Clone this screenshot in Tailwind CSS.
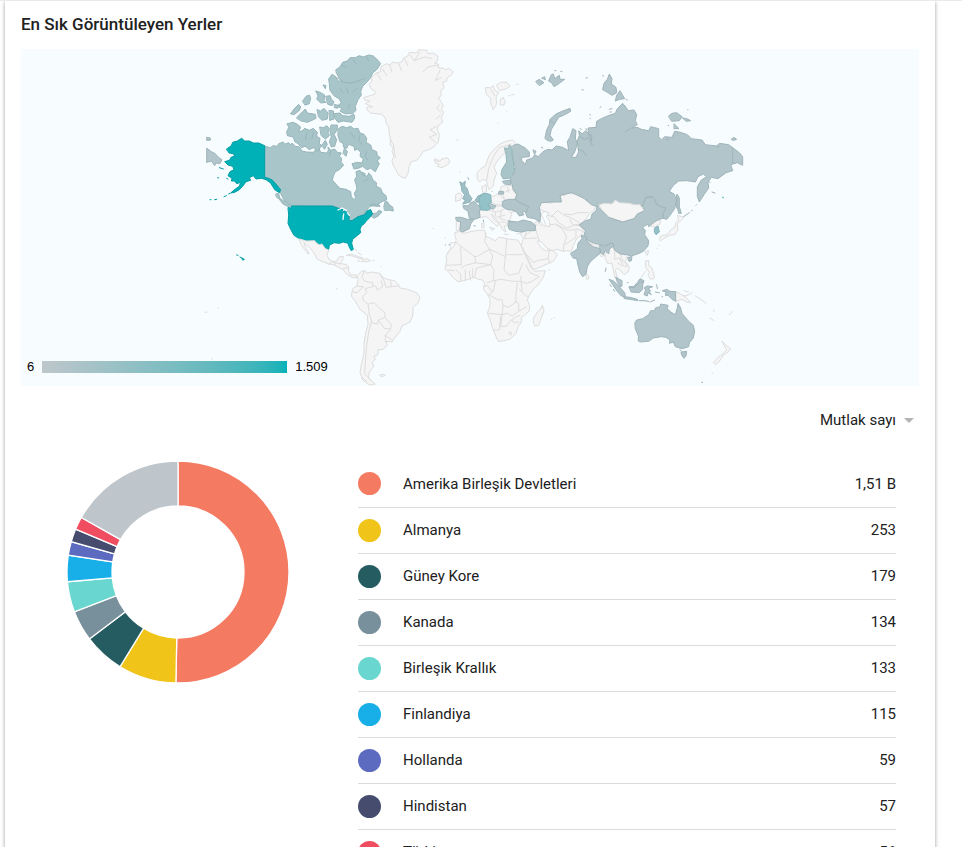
<!DOCTYPE html>
<html lang="tr">
<head>
    <meta charset="UTF-8">
    <meta name="viewport" content="width=device-width, initial-scale=1.0">
    <title>En Sık Görüntüleyen Yerler</title>
    <script src="https://cdn.jsdelivr.net/npm/@tailwindcss/browser@4"></script>
</head>
<body class="h-screen overflow-hidden bg-white border-t border-[#e8eaed] pl-[5px] pr-[27px] font-[Roboto,sans-serif] text-[#212121]">

    <main class="min-h-full bg-white px-4 pb-6 shadow-[0_1px_4px_rgba(0,0,0,0.4)]">
        <h2 class="h-12 flex items-center text-[17px] font-medium">En Sık Görüntüleyen Yerler</h2>

        <!-- Dünya haritası -->
        <div class="relative bg-[#f7fcff]">
            <svg viewBox="0 0 2694 1011" class="block w-full" stroke-width="3" stroke-linejoin="round" stroke-linecap="round" role="img" aria-label="Dünya haritası">
                <!-- Kanada -->
                <g transform="translate(537 -12)" fill="#a8c5ca" stroke="#98b5ba">
                    <path d="M194 304L212 308 218 302 232 304 236 296 250 291 254 298 266 293 272 300 276 294 286 304 298 306 306 318 320 321 340 322 345 316 358 312 362 322 378 324 385 318 384 306 392 316 404 312 412 322 424 324 418 334 425 340 423 352 431 360 418 374 405 381 400 394 397 405 410 420 420 430 438 433 452 440 454 455 462 464 467 458 463 445 471 432 468 418 464 405 470 394 468 380 480 376 490 390 502 394 506 384 514 392 518 404 530 414 528 424 542 430 548 444 558 452 560 464 546 470 530 480 510 484 498 498 490 508 512 494 518 506 530 504 536 496 546 500 536 512 522 520 512 512 486 512 472 522 452 530 446 516 442 500 430 492 397 484 268 483 254 468 240 442 236 428 222 412 206 402 194 397Z"/>
                    <path d="M228 447l8 -2 3 14 12 9 8 2 12 12 -6 3 -16 -8 -11 -14 -8 -6zM552 482l4 -14 8 4 4 8 10 6 2 12 -12 -2 -14 0z"/>
                    <path d="M262 236L280 232 292 238 302 246 296 262 308 256 314 250 328 256 340 250 352 262 350 274 360 280 358 296 366 302 352 318 340 308 328 314 316 304 304 308 294 296 284 290 280 276 262 272 260 260 266 248Z"/>
                    <path d="M360 246L370 248 380 242 388 250 384 262 388 272 376 282 364 272ZM394 240L412 240 412 254 402 268 410 284 404 304 394 306 388 290 394 276 390 260ZM366 300l10 -14 6 12 -8 14z"/>
                    <path d="M415 252L426 244 440 248 452 244 462 252 474 250 480 264 492 268 500 280 498 292 512 300 516 314 530 320 532 332 541 338 532 348 538 356 532 368 526 380 512 370 500 374 488 364 474 370 462 372 456 356 472 352 486 354 490 342 480 334 482 322 472 312 464 316 462 304 446 298 440 310 430 306 430 296 420 290 414 272Z"/>
                    <path d="M434 310l8 10 -4 14 -8 -8zM486 382l10 4 -4 6zM512 480l8 -4 8 4 8 -2 4 6 -12 0z"/>
                    <path d="M408 74L420 66 428 52 442 48 450 38 466 38 478 32 490 36 506 30 520 33 534 46 542 56 530 74 518 84 512 98 500 112 488 124 482 140 484 150 474 164 466 184 468 196 458 206 434 206 420 198 426 190 410 184 424 174 418 162 402 152 390 136 388 116 386 102 396 88 408 96 414 108 426 108 416 96 410 86Z"/>
                    <path d="M403 206L420 204 428 212 448 214 462 208 464 220 456 232 430 228 414 232 406 222Z"/>
                    <path d="M348 138L360 142 374 150 372 166 378 172 362 174 350 162 354 154ZM378 154L390 152 394 162 402 170 396 182 384 178ZM308 168L318 154 328 150 332 160 328 176 316 180ZM272 206L282 192 296 178 302 186 298 196 284 208ZM290 218L306 202 316 192 322 204 346 208 348 220 336 226 322 232 304 228ZM352 194L362 198 372 190 384 204 382 222 366 226 356 216ZM388 196L400 198 402 222 390 226ZM370 120l8 2 -2 8zM404 178l12 4 -4 8 -8 -2z"/>
                    <path fill="none" d="M412 98l18 14 26 2 18 -6 20 -8M424 60l16 8M460 44l10 14M500 36l6 12M440 130l4 16M470 130l-12 12M320 264l-4 20M340 262l-4 18M450 262l14 16M480 270l-4 16 10 12M500 320l-4 14 8 12M392 318l-4 14M505 402l-16 8M420 132l10 12M450 176l-6 14"/>
                </g>
                <!-- Grönland, İzlanda, Svalbard -->
                <g transform="translate(957 -12)" fill="#f5f5f5" stroke="#dddddd">
                    <path d="M72 158L90 152 104 148 106 140 94 132 88 118 96 108 94 98 108 84 122 80 122 66 140 56 150 60 156 52 172 54 186 50 192 38 202 34 208 22 230 24 236 14 260 16 264 26 280 24 294 34 292 48 284 54 296 58 294 68 310 70 316 74 326 70 340 80 334 90 322 98 320 108 308 112 312 128 302 138 304 152 296 158 304 172 310 182 304 192 311 202 304 218 308 232 296 240 292 254 298 268 295 290 284 304 268 314 250 319 240 334 230 346 214 350 208 362 204 384 196 400 184 396 174 388 168 374 160 362 156 346 162 334 156 320 160 308 150 300 152 284 148 268 146 246 138 234 136 220 126 208 108 206 92 204 80 194 82 186 98 186 76 176 90 168 76 166Z"/>
                    <path d="M283 344L294 350 304 343 322 338 330 350 322 360 306 368 292 364 298 358 288 356ZM437 128L452 128 460 122 464 136 476 142 468 156 470 176 460 194 452 176 452 160 440 148ZM470 120L482 112 500 112 510 124 498 132 480 136ZM482 162l8 -4 6 14 -4 8 -10 0zM506 152l5 0M516 148l6 2M474 234l1 0M500 198l1 0M530 118l5 0M350 286l4 -2M360 382l2 0"/>
                    <path fill="none" d="M112 86l12 20M128 72l12 20M150 62l6 20M176 56l8 20M194 42l10 20M210 30l14 18M240 20l-16 26 30 -10 20 4M294 60l-30 6 -14 14M300 76l-14 30 18 -8M298 180l-8 10 12 12M300 212l-12 10M290 244l-20 10 20 14 -22 8 18 16M150 282l10 16 6 40M452 132l12 20"/>
                </g>
                <!-- ABD -->
                <g fill="#00b2b8" stroke="#009da3">
                    <path transform="translate(537 -12)" d="M80 312L94 302 98 292 112 288 125 280 134 288 148 288 160 294 176 294 194 302 194 397 206 400 218 406 230 420 242 434 238 443 224 434 212 414 198 404 184 400 168 402 160 392 148 398 152 406 138 410 128 424 118 434 104 442 92 444 106 432 118 424 122 412 110 416 104 408 94 408 96 400 84 392 90 380 102 374 98 364 84 360 74 350 88 346 94 336 104 334 100 326 88 324ZM30 464l3 0M44 464l6 -1M72 455l7 -3M86 447l4 -2M58 368l12 4M53 398l3 1M80 400l4 2"/>
                    <path transform="translate(537 423)" d="M265 53L274 54 274 48 397 48 412 54 430 58 424 68 436 62 444 70 448 82 446 92 456 92 474 80 494 74 502 62 512 59 517 72 508 84 498 94 494 100 484 108 480 118 482 128 470 138 458 148 455 160 460 178 454 182 448 172 444 160 430 156 418 160 402 158 388 166 386 178 376 174 366 162 358 164 350 160 344 152 320 153 298 146 282 136 272 118 264 100 266 76ZM110 195l4 1M120 201l4 2M126 204l7 4 -4 2z"/>
                    <path transform="translate(1527 33)" d="M578 412l2 1"/>
                </g>
                <path transform="translate(537 423)" fill="none" stroke="#f7fcff" stroke-width="4" d="M414 60l12 -6 14 8M431 72l-2 16M442 68l6 8"/>
                <!-- Orta ve Güney Amerika -->
                <g transform="translate(537 423)" fill="#f5f5f5" stroke="#dddddd">
                    <path d="M298 147L320 153 344 152 350 160 358 164 366 162 376 176 386 180 381 196 388 210 402 215 412 212 416 201 430 199 428 210 420 220 440 224 446 230 446 244 454 256 468 254 470 264 456 262 440 252 430 240 416 232 400 224 386 222 366 214 350 206 344 192 332 176 318 164 312 158 316 172 328 190 324 192 312 176 304 164Z"/>
                    <path d="M472 256L484 244 496 242 500 250 516 246 540 250 548 262 562 268 584 272 594 282 600 294 622 298 650 308 660 322 654 338 640 352 638 378 630 396 606 408 600 424 584 444 576 456 558 454 562 464 550 478 534 480 534 494 522 498 526 508 516 518 522 528 508 546 506 562 514 574 526 582 508 585 488 570 480 548 484 524 492 490 492 460 498 424 504 404 502 376 480 358 466 334 454 318 458 296 470 288 474 270Z"/>
                    <path d="M440 196l14 -4 16 6 18 6 -10 2 -20 -8zM488 208l12 -2 12 6 -10 3 -16 -1zM472 212l8 2M518 212l5 0M540 556l6 -3 10 2 -8 5zM466 178l4 3M474 188l10 6M543 230l1 0M409 296l3 1M15 367l6 -1M54 353l2 1M36 507l2 0"/>
                    <path fill="none" d="M492 244l-6 18 8 12 24 4 0 12 -22 6M496 294l4 14 -12 10 2 14 14 10 4 32 8 22M458 306l14 2 18 -18 -18 -2M518 286l10 4 4 10 16 -10 -4 -18M540 252l12 20 6 20 16 -2 20 -2M572 272l2 18M506 342l16 -4 16 16 16 14 0 14 -18 8 -4 12 -18 -4M554 380l8 12 12 10 -2 14 -18 0 -16 -22M572 418l-16 18 0 20M556 436l20 14M514 396l-8 30 -6 40 -4 50 -2 36 20 20M386 222l16 -8 4 12M404 218l18 4M430 236l14 -4M486 562l14 12"/>
                </g>
                <!-- Afrika, Ortadoğu, Orta Asya -->
                <g transform="translate(1227 513)" fill="#f5f5f5" stroke="#dddddd">
                    <path d="M75 38L88 34 102 40 124 34 150 31 164 31 168 50 180 54 196 62 206 52 222 54 240 58 264 60 274 78 282 98 292 118 302 140 314 154 346 152 340 172 326 192 308 210 298 226 292 240 299 256 298 272 286 284 274 292 274 306 264 322 258 340 240 358 222 362 205 365 198 350 188 326 182 304 172 280 180 258 180 238 172 222 160 208 164 192 158 180 146 178 130 172 114 178 100 182 84 185 70 174 58 158 45 146 50 124 48 108 58 92 72 78 78 62Z"/>
                    <path d="M312 292L322 276 332 268 337 255 342 272 334 294 326 316 314 318 310 304ZM364 298l2 -1M372 293l2 0M356 149l3 0M45 53l1 0M9 26l2 0"/>
                    <path d="M274 32L286 34 296 28 318 30 314 8 330 4 344 20 350 6 346 -12 342 -26 328 -34 332 -50 346 -54 362 -50 378 -58 396 -56 390 -74 404 -74 418 -84 430 -78 442 -82 462 -62 498 -42 492 -30 478 -18 462 4 448 14 462 32 454 46 440 56 430 76 424 94 410 92 398 94 382 88 366 92 350 84 338 70 326 60 322 66 334 84 346 92 356 90 368 92 382 104 372 122 352 132 320 146 308 148 298 124 286 100 274 76 280 54 274 48Z"/>
                    <path fill="none" d="M82 68l-20 0 0 18 -10 14M84 72l50 38 10 -2 34 -20 -14 -24 4 -24M92 80l2 54 -44 2M134 110l4 18 -32 8 -12 8M230 58l-4 52 -46 -22M230 104l48 0M178 88l10 20 -6 26 -42 10 -6 26M226 110l-4 40 14 16 30 -6 12 -30M182 134l10 16 -2 32 24 -4 22 4 14 2M182 134l-48 -6M190 182l-18 6M196 184l-6 30 -14 10 28 16 12 -2 2 18 18 6 22 -16 0 -26 4 -30M250 184l22 0 16 6 14 -4 26 -16 -28 -12 -12 -22M176 280l40 4 16 -4 14 8 20 -14 24 -14M220 256l-4 28 -4 36 18 -2 14 -18 12 -8 14 -6M212 290l-4 40 -16 0M244 300l10 8 12 -2M242 336l4 6 -5 3 -4 -5zM254 244l12 6 0 22M268 208l26 24M106 150l0 32M118 154l4 26M78 150l14 12 0 22M56 150l16 2M128 146l0 28M272 170l4 42M160 200l12 -4 16 20"/>
                    <path fill="none" d="M288 36l-4 20 36 -2M318 30l10 34M282 96l10 10 18 22 12 -6 32 -6 4 -24M354 116l6 14M350 16l26 -4 22 16 12 24 -8 20 -2 22M352 -14l20 4 12 16 26 18 28 -10 10 -2M364 -10l18 -18 22 14 20 8 24 14M404 -18l20 2 20 -6 30 0M410 30l28 0 0 22 -34 22M438 26l22 8M320 4l16 14M328 8l-12 12M378 12l32 18M420 -2l8 16 24 4M282 50l20 -16"/>
                    <path fill="#f7fcff" d="M334 -18l10 -8 12 4 -6 12 8 12 2 18 -12 -2 -6 -18z"/>
                </g>
                <!-- Avrupa, veri yok -->
                <g transform="translate(1227 243)" fill="#f5f5f5" stroke="#dddddd">
                    <path d="M150 240L182 202 222 196 220 170 246 166 262 198 256 212 262 240 244 248 238 266 212 262 190 248Z"/>
                    <path d="M142 128L152 116 166 108 172 90 180 72 194 56 210 42 228 34 248 30 258 40 252 50 238 44 228 52 226 68 212 80 200 96 192 112 200 130 192 150 190 168 178 180 172 166 170 152 160 148 148 156 142 146Z"/>
                    <path d="M214 170L230 164 246 166 250 182 260 196 250 210 222 208 210 196ZM182 202L204 192 220 194 224 214 218 226 200 224 184 218ZM156 170l12 -6 2 20 -10 6zM78 194l10 -6 8 8 -4 14 -14 4zM80 274h12l-4 28h-8zM184 184l4 1M15 86l14 8 8 -8"/>
                    <path d="M150 242L176 240 190 228 216 228 232 236 246 252 240 268 230 276 234 288 222 288 228 306 216 298 208 280 194 262 184 252 192 268 206 280 202 290 186 276 170 260 152 262ZM180 292l14 4 -6 6zM156 280l6 0 0 14 -5 0zM222 312l14 2M262 312l10 -3"/>
                    <path fill="none" d="M170 150l6 -34 14 -36 18 -28 20 -4 14 -6M216 190l24 -10M232 168l4 20M176 240l20 6 18 -4 14 -8M196 246l0 12M214 242l-4 24 16 4M200 262l24 -6M210 276l16 0"/>
                </g>
                <!-- Rusya -->
                <g transform="translate(1527 33)" fill="#b1c5ca" stroke="#9fb4ba">
                    <path d="M-50 256L-36 252 -14 264 -2 276 -2 290 -24 292 -26 300 -14 314 -10 300 8 294 14 284 24 290 40 274 54 268 66 270 78 258 98 262 116 272 112 244 120 232 128 206 138 212 136 234 142 252 134 276 124 292 138 292 146 276 142 244 148 226 146 212 156 222 168 212 178 224 186 226 184 244 176 222 174 204 198 202 200 184 214 176 232 168 256 160 262 146 278 130 288 142 294 152 312 150 320 164 316 182 322 194 304 204 322 202 334 208 356 212 362 200 386 206 386 230 394 240 404 230 426 232 434 214 448 216 472 224 484 236 516 240 526 254 560 258 568 250 596 254 612 266 628 278 638 290 638 316 622 308 602 314 608 332 588 338 564 356 544 352 534 366 536 384 522 404 508 426 502 410 502 380 514 360 530 350 520 342 504 350 496 366 472 362 446 363 430 376 418 394 432 402 440 420 434 446 420 466 410 478 396 474 402 450 380 434 372 412 350 410 340 440 314 434 272 432 256 422 248 434 210 436 202 440 184 434 164 416 126 398 90 406 94 426 66 426 34 428 28 442 32 464 30 486 14 476 -8 472 -14 456 -4 440 -22 436 -44 420 -40 402 -50 390 -54 372 -62 362 -50 344 -44 320 -52 300Z"/>
                    <path d="M45 234L50 210 58 194 60 178 78 162 96 154 120 145 122 154 104 164 86 172 74 192 64 208 60 226 70 240 62 244 50 240ZM218 88L222 70 232 58 238 42 246 56 244 72 258 82 260 98 246 106 234 98ZM256 122L260 106 270 92 284 116 270 118ZM416 168L426 160 440 158 456 170 448 182 426 184ZM458 174l12 2 12 6 -12 2zM433 192l14 14 -14 0zM604 238l8 -6 8 6 -8 3zM442 404l6 10 0 26 6 20 -8 0 -4 -18z"/>
                    <path d="M18 64l10 -6 14 10 -14 8zM36 54l8 -4 2 8zM56 62l8 -18 6 -2 4 14 14 -10 2 12 14 0 -16 12 -16 10 -6 -10zM74 32l4 0M92 34l4 1M168 54l4 -1M156 89l4 1M218 47l3 1M210 142l3 -2M180 163l1 2M180 176l1 0M238 148l8 -2M240 156l4 0M288 118l4 2M473 149l1 0M414 196l2 1M10 270l8 4 -4 8zM34 262l4 2M150 205l4 4M168 206l2 4M538 366l2 1M546 396l9 3M498 436l2 -2M485 452l2 -1M478 458l-20 14M144 268l14 4 10 14M180 240l4 14 6 2M410 238l6 0"/>
                    <path fill="none" d="M608 266l0 42M300 206l-14 10M60 180l12 12M150 230l14 8 12 -4M560 262l8 -4M440 404l0 40"/>
                    <path transform="translate(-990 -45)" d="M21 310L34 320 46 326 54 336 66 344 60 356 48 354 44 362 34 348 21 352ZM21 277l10 2 0 7 -10 0z"/>
                </g>
                <!-- Avrupa ülkeleri -->
                <g transform="translate(1227 243)" fill="#b1c5ca" stroke="#9fb4ba">
                    <path d="M218 214L236 208 256 208 268 218 280 222 296 230 290 244 276 246 282 254 268 258 260 246 246 240 230 238 218 230ZM235 280L246 274 262 276 280 270 304 276 316 286 316 302 290 302 276 306 256 304 238 298ZM236 272l8 2 -6 4zM100 226L114 228 120 220 132 214 142 224 152 232 148 246 150 262 134 268 118 264 114 244 102 236ZM78 262L94 262 112 268 132 268 122 282 118 296 98 306 90 302 92 276 80 272ZM208 184l12 0 0 8 -14 0zM218 154l24 -4 0 14 -18 -2zM182 222l16 6 -8 10 -12 -6zM132 287l4 1M160 270l1 6M46 345l1 0M57 344l2 0M138 216l10 0"/>
                    <path fill="#9dbfc5" stroke="#8eb0b6" d="M90 156L98 160 106 154 104 168 112 176 116 192 126 206 120 216 98 222 106 210 98 206 104 194 96 184 94 170ZM114 143l2 5M136 210L144 198 154 194 150 216 138 214Z"/>
                    <path fill="#a8c5ca" stroke="#98b5ba" d="M224 54L234 56 238 45 246 52 246 72 250 96 254 124 240 144 220 147 213 134 216 118 230 96 228 74Z"/>
                    <path fill="#93c2c8" stroke="#84b3b9" d="M148 204L156 192 168 190 182 194 184 218 174 224 182 236 172 241 152 239 148 222Z"/>
                </g>
                <!-- Asya ve Okyanusya, veri yok -->
                <g transform="translate(1617 423)" fill="#f5f5f5" stroke="#dddddd">
                    <path d="M118 44L134 40 156 42 166 30 178 38 208 40 222 44 240 44 246 54 254 62 232 72 222 86 188 96 146 82 126 62ZM82 156l20 6 16 8 -2 6 -16 -2 -16 -8z"/>
                    <path d="M136 192L146 174 156 166 164 184 180 192 196 194 202 204 196 214 208 230 206 244 192 254 182 242 172 234 166 240 172 264 164 262 160 240 156 220 142 220 136 206ZM118 184l8 0 8 12 -10 4zM80 252l8 10 -6 8 -4 -8zM258 184l8 -2 -4 14 -5 -4z"/>
                    <path d="M258 212l8 0 0 14 10 8 8 30 -12 4 -8 -12 4 -8 -10 -14zM256 244l-12 18M272 108L286 94 302 90 300 102 284 110ZM298 148L302 138 322 134 332 120 344 112 348 96 356 92 352 76 372 82 362 92 352 102 354 120 344 134 328 136 314 144 302 152ZM347 305L362 312 376 320 392 338 380 336 366 328 348 334ZM372 318l16 -4 8 -6M372 302l14 4M406 318l14 8 18 14M450 384l12 8M460 360l2 4M508 374l4 -2M514 367l3 -1M487 454L498 466 512 476 502 488 490 494 484 506 476 516 466 524 460 518 474 502 490 490 500 480 492 466ZM456 549l3 1M296 166l2 0M290 175l1 0"/>
                    <path fill="none" d="M164 186l0 22 14 -4 12 12M178 204l10 22 12 4M172 218l14 10M180 192l6 14 16 22"/>
                </g>
                <g transform="translate(1617 423)" fill="#b1c5ca" stroke="#9fb4ba">
                    <path d="M58 104L76 92 92 88 96 72 108 62 112 48 126 62 146 82 188 96 222 86 232 72 254 62 248 48 256 24 276 20 290 44 304 50 318 54 308 72 310 84 292 90 278 100 266 110 264 102 248 112 256 122 254 134 266 152 264 168 250 184 232 192 214 198 200 194 182 192 164 180 158 164 130 166 104 160 84 152 72 136 76 122Z"/>
                    <path d="M32 190L42 184 52 176 54 160 66 146 64 136 78 140 82 156 100 170 120 176 122 188 106 202 90 216 82 230 78 252 68 260 60 248 54 226 50 206 40 204ZM120 166L134 170 156 158 162 166 148 178 146 192 136 182 130 194 122 188ZM204 202l12 -2 -2 12 -6 2zM138 234l-2 10"/>
                    <path d="M168 262l10 6 8 4 0 16 -6 2 -8 -14zM148 268L162 274 178 290 194 308 196 320 184 318 170 302 158 284ZM192 320L210 322 232 328 234 332 210 328 194 326ZM238 332l14 0 14 2M270 336l14 -6M208 290L220 290 232 278 240 266 252 272 248 284 248 298 238 308 214 306ZM254 292L262 288 278 290 264 296 272 302 268 306 274 314 264 308 262 318 252 314 256 302ZM290 284l2 12M286 306l12 2M308 302L320 298 330 304 347 305 347 334 336 328 324 316 316 316 318 308ZM150 284l4 6M160 298l4 6M306 320l2 0M202 278l2 0"/>
                    <path d="M225 398L230 390 248 386 266 374 272 362 284 362 286 354 300 350 302 342 324 346 322 356 332 366 346 374 352 354 354 340 362 354 366 370 374 380 386 394 400 406 404 424 400 444 388 458 386 470 366 476 346 470 340 456 328 460 330 450 318 442 304 440 280 444 266 454 240 456 234 452 236 440 226 416ZM360 480l4 3M364 486l16 -2 -2 14 -6 7 -6 -8zM425 577l3 0"/>
                    <path fill="#93c2c8" stroke="#84b3b9" d="M284 114L294 108 298 126 288 134 284 128Z"/>
                    <path fill="none" d="M208 292l16 0 16 -16 10 0"/>
                </g>
            </svg>
            <div class="absolute left-[6px] bottom-[11px] flex items-center gap-2 font-['Liberation_Sans',Arial,sans-serif] text-[13px] leading-4 text-black">
                <span>6</span>
                <span class="w-[245px] h-3 bg-linear-to-r from-[#bdc6cb] to-[#00b2b8]"></span>
                <span>1.509</span>
            </div>
        </div>

        <div class="flex justify-end pt-[22px] pr-[5px]">
            <label class="relative flex items-center">
                <span class="sr-only">Ölçüm</span>
                <select class="appearance-none bg-transparent h-6 pr-[17px] text-[15px] cursor-pointer">
                    <option>Mutlak sayı</option>
                </select>
                <svg viewBox="0 0 10 5" class="absolute right-0 w-[10px] h-[5px] pointer-events-none" fill="#b4b4b4"><path d="M0 0h10L5 5z"/></svg>
            </label>
        </div>

        <div class="flex items-start justify-between pt-[29px] pl-[46px] pr-[23px]">
            <svg id="donut" viewBox="0 0 222 222" class="w-[222px] shrink-0" stroke="#ffffff" stroke-width="1.3" role="img" aria-label="Ülkelere göre dağılım"></svg>

            <table class="ml-[69px] w-full text-[15px]">
                <tbody>
                    <tr class="h-[46px] border-b border-[#dcdcdc]">
                        <td class="w-[45px]"><span class="block size-[23px] rounded-full bg-[#f47b62]"></span></td>
                        <td>Amerika Birleşik Devletleri</td>
                        <td class="text-right">1,51 B</td>
                    </tr>
                    <tr class="h-[46px] border-b border-[#dcdcdc]">
                        <td><span class="block size-[23px] rounded-full bg-[#f0c419]"></span></td>
                        <td>Almanya</td>
                        <td class="text-right">253</td>
                    </tr>
                    <tr class="h-[46px] border-b border-[#dcdcdc]">
                        <td><span class="block size-[23px] rounded-full bg-[#255c61]"></span></td>
                        <td>Güney Kore</td>
                        <td class="text-right">179</td>
                    </tr>
                    <tr class="h-[46px] border-b border-[#dcdcdc]">
                        <td><span class="block size-[23px] rounded-full bg-[#78909c]"></span></td>
                        <td>Kanada</td>
                        <td class="text-right">134</td>
                    </tr>
                    <tr class="h-[46px] border-b border-[#dcdcdc]">
                        <td><span class="block size-[23px] rounded-full bg-[#69d6cf]"></span></td>
                        <td>Birleşik Krallık</td>
                        <td class="text-right">133</td>
                    </tr>
                    <tr class="h-[46px] border-b border-[#dcdcdc]">
                        <td><span class="block size-[23px] rounded-full bg-[#18aee8]"></span></td>
                        <td>Finlandiya</td>
                        <td class="text-right">115</td>
                    </tr>
                    <tr class="h-[46px] border-b border-[#dcdcdc]">
                        <td><span class="block size-[23px] rounded-full bg-[#5c6bc0]"></span></td>
                        <td>Hollanda</td>
                        <td class="text-right">59</td>
                    </tr>
                    <tr class="h-[46px] border-b border-[#dcdcdc]">
                        <td><span class="block size-[23px] rounded-full bg-[#464c6e]"></span></td>
                        <td>Hindistan</td>
                        <td class="text-right">57</td>
                    </tr>
                    <tr class="h-[46px]">
                        <td><span class="block size-[23px] rounded-full bg-[#f04e60]"></span></td>
                        <td>Türkiye</td>
                        <td class="text-right">56</td>
                    </tr>
                </tbody>
            </table>
        </div>
    </main>

    <script>
        const slices = [
            [1509, "#f47b62"],
            [253, "#f0c419"],
            [179, "#255c61"],
            [134, "#78909c"],
            [133, "#69d6cf"],
            [115, "#18aee8"],
            [59, "#5c6bc0"],
            [57, "#464c6e"],
            [56, "#f04e60"],
            [505, "#bec6cb"]
        ];
        const total = slices.reduce((sum, s) => sum + s[0], 0);

        function point(value, r) {
            const a = value / total * 2 * Math.PI;
            return (111 + r * Math.sin(a)) + " " + (111 - r * Math.cos(a));
        }

        let start = 0;
        let html = "";
        slices.forEach(([value, color]) => {
            const end = start + value;
            const large = value > total / 2 ? 1 : 0;
            html += `<path fill="${color}" d="M${point(start, 111)}A111 111 0 ${large} 1 ${point(end, 111)}L${point(end, 66)}A66 66 0 ${large} 0 ${point(start, 66)}Z"/>`;
            start = end;
        });
        document.getElementById("donut").innerHTML = html;
    </script>

</body>
</html>
